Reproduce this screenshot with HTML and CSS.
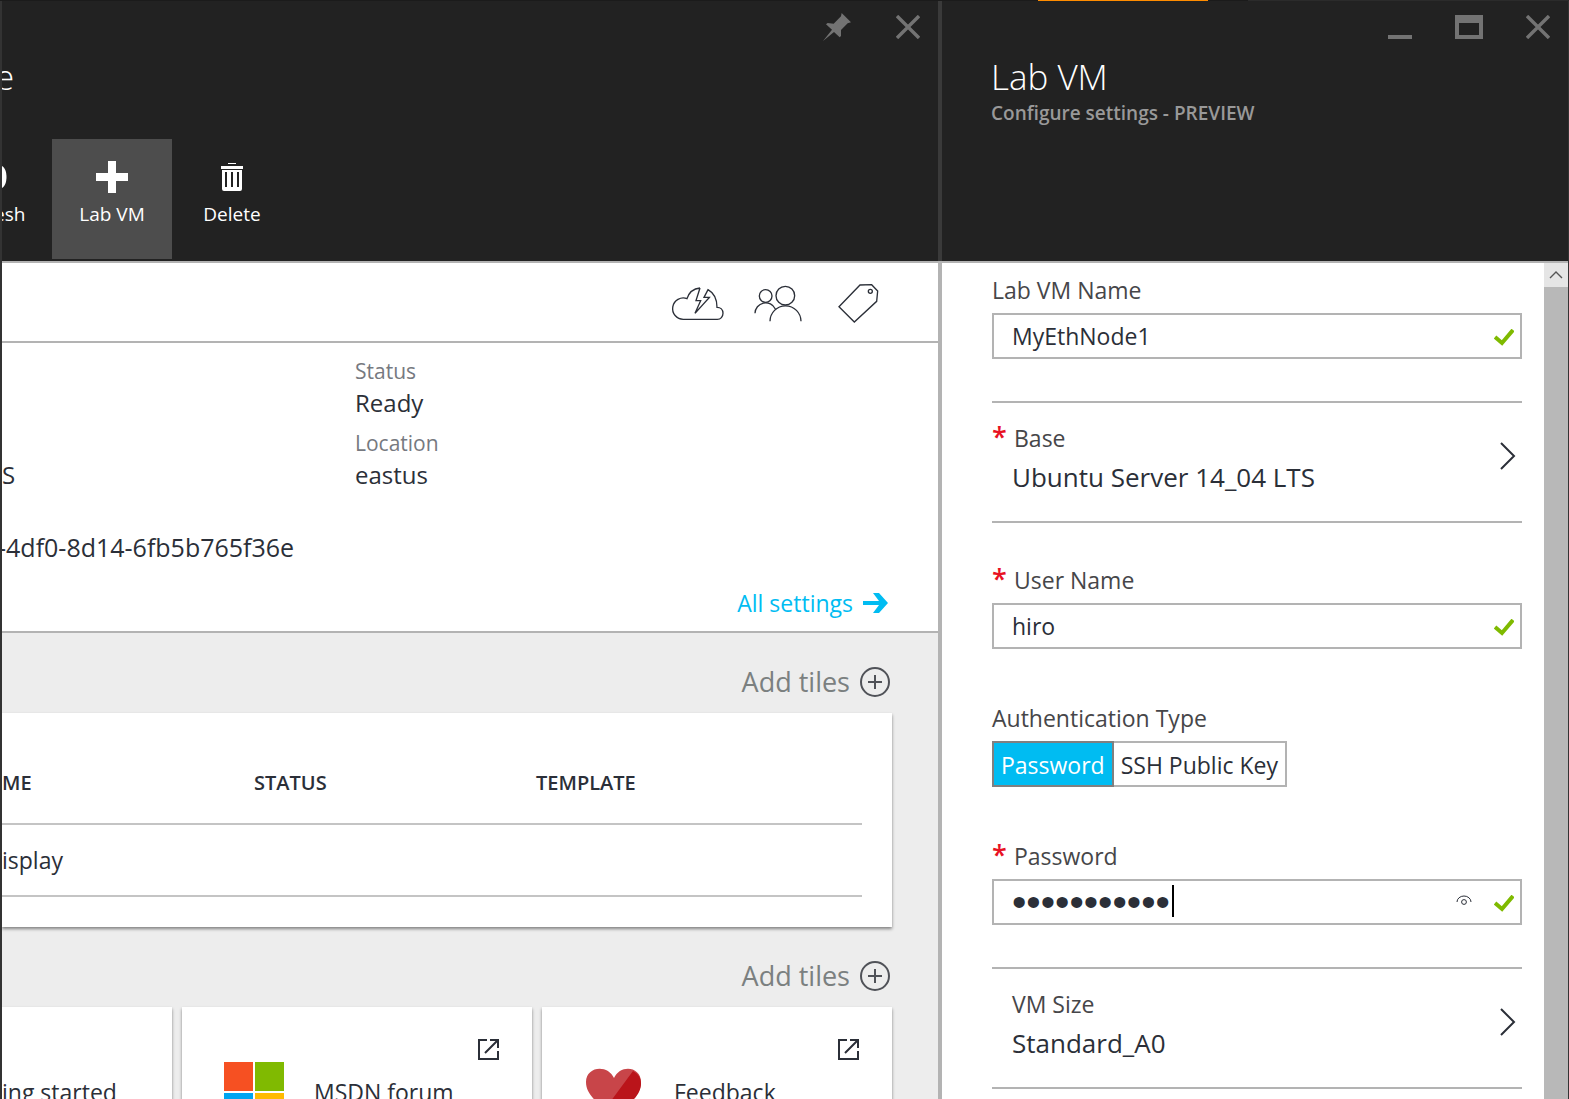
FILE: index.html
```html
<!DOCTYPE html>
<html lang="en">
<head>
<meta charset="utf-8">
<title>Lab VM</title>
<link rel="stylesheet" href="styles.css">
</head>
<body>
<div class="progress"><span class="progress-before"></span><span class="progress-bar"></span><span class="progress-after"></span><span class="progress-rest"></span></div>
<main class="journey">
  <section class="blade blade-lab">
    <header class="blade-header">
      <div class="controls">
        <button class="control" aria-label="Pin"><svg width="28" height="28" viewBox="0 0 84 84"><path d="M56 0 84 28 74 31 54 51 54 69 50 73 33 57 0 84 27 50 9 34 14 30 32 32 54 10Z" fill="#737373"/></svg></button>
        <button class="control" aria-label="Close"><svg width="24" height="24" viewBox="0 0 24 24"><path d="M1 1 23 23M23 1 1 23" stroke="#737373" stroke-width="3.4"/></svg></button>
      </div>
      <h1 class="title title-cut">e</h1>
      <div class="toolbar">
        <button class="tool tool-cut"><svg width="6" height="32" viewBox="0 0 6 32"><path d="M0 5C6 8 6 24 0 27Z" fill="#fff"/></svg><span>esh</span></button>
        <button class="tool tool-active"><svg width="32" height="32" viewBox="0 0 32 32"><path d="M12 0h8v12h12v8H20v12h-8V20H0v-8h12z" fill="#fff"/></svg><span>Lab VM</span></button>
        <button class="tool"><svg width="22" height="32" viewBox="0 0 22 32"><path d="M7 2h8v1H7zM0 5h22v3H0zM1 9h20v19q0 2-2 2H3q-2 0-2-2zM4 11v15h2V11zM10 11v15h2V11zM16 11v15h2V11z" fill="#fff" fill-rule="evenodd"/></svg><span>Delete</span></button>
      </div>
    </header>
    <div class="iconbar">
      <svg width="80" height="78" viewBox="54 37 240 234" class="line-icon"><path d="M180 112 168 150 182 150 165 188 208 140 192 140 204 117Q231 132 231 170C242 170 249 178 249 188S242 206 232 206H130A32 32 0 1 1 141 144C147 125 160 114 180 112M172 180 208 141"/></svg>
      <svg width="80" height="78" viewBox="294 37 240 234" class="line-icon"><circle cx="377" cy="136" r="19"/><circle cx="436" cy="135" r="28"/><path d="M345 188A32 32 0 0 1 406 175M390 212A46 46 0 0 1 483 212"/></svg>
      <svg width="80" height="78" viewBox="534 37 240 234" class="line-icon"><path d="M597 168 660 103 695 102 713 121 710 152 643 214Z"/><circle cx="691" cy="122" r="6"/></svg>
    </div>
    <div class="essentials">
      <div class="facts">
        <div class="facts-left"><span>S</span><span class="fact-id">-4df0-8d14-6fb5b765f36e</span></div>
        <dl class="facts-right">
          <dt>Status</dt><dd>Ready</dd>
          <dt>Location</dt><dd>eastus</dd>
        </dl>
      </div>
      <a class="all-settings" href="#settings">All settings<svg width="25" height="20" viewBox="0 0 25 20"><path d="M0 8h16L10 0h6l9 10-9 10h-6l6-8H0z" fill="#00bcf2"/></svg></a>
    </div>
    <div class="lens">
      <button class="add-tiles">Add tiles<svg width="30" height="30" viewBox="0 0 30 30"><circle cx="15" cy="15" r="14"/><path d="M15 8v14M8 15h14"/></svg></button>
      <div class="tile tile-table">
        <table>
          <thead><tr><th class="col-name">ME</th><th class="col-status">STATUS</th><th>TEMPLATE</th></tr></thead>
          <tbody><tr><td colspan="3">isplay</td></tr></tbody>
        </table>
      </div>
      <button class="add-tiles">Add tiles<svg width="30" height="30" viewBox="0 0 30 30"><circle cx="15" cy="15" r="14"/><path d="M15 8v14M8 15h14"/></svg></button>
      <div class="links">
        <a class="tile link-tile link-cut" href="#start">ing started</a>
        <a class="tile link-tile" href="#forum">
          <svg width="60" height="60" viewBox="0 0 60 60"><path d="M0 0h29v29H0z" fill="#f65022"/><path d="M31 0h29v29H31z" fill="#80ba01"/><path d="M0 31h29v29H0z" fill="#00a5f1"/><path d="M31 31h29v29H31z" fill="#ffbb00"/></svg>
          MSDN forum
          <svg class="external" width="21" height="21" viewBox="0 0 21 21"><path d="M9 1H1v19h19v-8M12 1h8v8M20 1 7 14"/></svg>
        </a>
        <a class="tile link-tile" href="#feedback">
          <svg width="60" height="60" viewBox="0 0 60 60"><path d="M30 16C24 2 2 4 2 20c0 14 14 22 28 36 14-14 27-22 27-36C57 4 36 2 30 16Z" fill="#c84549"/><path d="M49 9c12 6 9 20 1 28-6 6-14 13-20 19l-9-9Z" fill="#ba141a"/></svg>
          Feedback
          <svg class="external" width="21" height="21" viewBox="0 0 21 21"><path d="M9 1H1v19h19v-8M12 1h8v8M20 1 7 14"/></svg>
        </a>
      </div>
    </div>
  </section>
  <div class="divider"></div>
  <section class="blade blade-vm">
    <header class="blade-header">
      <div class="controls">
        <button class="control" aria-label="Minimize"><svg width="24" height="24" viewBox="0 0 24 24"><path d="M0 20h24v4H0z" fill="#737373"/></svg></button>
        <button class="control" aria-label="Maximize"><svg width="28" height="24" viewBox="0 0 28 24"><path d="M0 0h28v24H0zM4 8v12h20V8z" fill="#737373" fill-rule="evenodd"/></svg></button>
        <button class="control" aria-label="Close"><svg width="24" height="24" viewBox="0 0 24 24"><path d="M1 1 23 23M23 1 1 23" stroke="#737373" stroke-width="3.4"/></svg></button>
      </div>
      <h2 class="title">Lab VM</h2>
      <p class="subtitle">Configure settings - PREVIEW</p>
    </header>
    <div class="blade-body">
      <form class="form">
        <div class="field">
          <label class="label" for="vm-name">Lab VM Name</label>
          <div class="box"><input id="vm-name" type="text" value="MyEthNode1"><svg class="check" width="20" height="17" viewBox="0 0 20 17"><path d="M1 8 8 14 19 1" /></svg></div>
        </div>
        <button class="picker" type="button">
          <span class="picker-text"><span class="label"><span class="star">*</span>Base</span><span class="picker-value">Ubuntu Server 14_04 LTS</span></span>
          <svg width="16" height="66" viewBox="0 0 16 66"><path d="M1 20 14 33 1 46"/></svg>
        </button>
        <div class="field">
          <label class="label" for="user-name"><span class="star">*</span>User Name</label>
          <div class="box"><input id="user-name" type="text" value="hiro"><svg class="check" width="20" height="17" viewBox="0 0 20 17"><path d="M1 8 8 14 19 1" /></svg></div>
        </div>
        <div class="field" role="radiogroup" aria-labelledby="auth-type">
          <span class="label" id="auth-type">Authentication Type</span>
          <div class="toggle">
            <label class="option"><input type="radio" name="auth" checked><span>Password</span></label>
            <label class="option"><input type="radio" name="auth"><span>SSH Public Key</span></label>
          </div>
        </div>
        <div class="field">
          <label class="label" for="password"><span class="star">*</span>Password</label>
          <div class="box"><input id="password" type="password" value="abcdefghijk"><span class="caret"></span><svg class="eye" width="16" height="12" viewBox="0 0 16 12"><path d="M1 7a7 6 0 0 1 14 0"/><circle cx="8" cy="7" r="2.4"/></svg><svg class="check" width="20" height="17" viewBox="0 0 20 17"><path d="M1 8 8 14 19 1" /></svg></div>
        </div>
        <button class="picker" type="button">
          <span class="picker-text"><span class="label picker-label">VM Size</span><span class="picker-value">Standard_A0</span></span>
          <svg width="16" height="66" viewBox="0 0 16 66"><path d="M1 20 14 33 1 46"/></svg>
        </button>
      </form>
      <div class="scrollbar"><button class="scroll-up" aria-label="Scroll up"><svg width="14" height="8" viewBox="0 0 14 8"><path d="M1 7 7 1 13 7" fill="none" stroke="#555" stroke-width="1.4"/></svg></button></div>
    </div>
  </section>
</main>
</body>
</html>
```

FILE: styles.css
```css
* { box-sizing: border-box; margin: 0; padding: 0; }
body {
  display: flex;
  flex-direction: column;
  height: 100vh;
  overflow: hidden;
  background: #333;
  color: #2b2f38;
  font: 23px/32px "Open Sans", "Noto Sans", sans-serif;
}
button { border: 0; background: none; color: inherit; font: inherit; text-align: left; }
a { color: inherit; text-decoration: none; }
svg { display: block; flex: none; }

.progress { display: flex; flex: none; height: 1px; background: #1b1b1b; }
.progress-before { flex: 1038; }
.progress-bar { flex: 170; background: #ff8c00; }
.progress-after { flex: 40; }
.progress-rest { flex: 321; background: #2b2b2b; }

.journey {
  display: grid;
  grid-template-columns: minmax(0, 936fr) 4px minmax(0, 626fr);
  flex: 1;
  min-height: 0;
  padding: 0 1px 0 2px;
}
.blade { display: flex; flex-direction: column; min-height: 0; overflow: hidden; background: #fff; }
.blade-header {
  display: flex;
  flex: none;
  flex-direction: column;
  height: 262px;
  border-bottom: 2px solid #b3b3b3;
  background: #222;
  color: #fff;
}
.divider { background: linear-gradient(#3a3a3a 260px, #b3b3b3 260px); }
.controls { display: flex; justify-content: flex-end; gap: 11px; height: 54px; }
.blade-vm .controls { gap: 9px; }
.control { display: flex; align-items: center; justify-content: center; width: 60px; height: 52px; }
.title { padding-left: 49px; font-size: 35px; font-weight: 300; line-height: 44px; }
.title-cut { padding: 0; text-indent: -7px; }
.subtitle { padding-left: 49px; color: #999; font-size: 19px; font-weight: 600; line-height: 28px; }

.toolbar { display: flex; margin: auto 0 2px; }
.tool {
  display: flex;
  flex-direction: column;
  align-items: center;
  gap: 7px;
  width: 120px;
  height: 120px;
  padding-top: 22px;
  font-size: 19px;
  line-height: 28px;
}
.tool-active { background: #4d4d4d; }
.tool-cut { align-items: flex-start; width: 50px; text-indent: -8px; }

.iconbar { display: flex; justify-content: flex-end; padding-right: 40px; border-bottom: 2px solid #b3b3b3; }
.line-icon { fill: none; stroke: #2b2f38; stroke-width: 4; }

.essentials { display: flex; flex-direction: column; padding: 12px 50px 12px 0; border-bottom: 2px solid #b3b3b3; }
.facts { display: grid; grid-template-columns: 353px 1fr; height: 232px; font-size: 24px; }
.facts-left { display: flex; flex-direction: column; gap: 40px; padding-top: 104px; }
.fact-id { font-size: 25px; text-indent: -4px; }
dt { color: #767980; font-size: 21px; }
dd { margin-bottom: 8px; }
.all-settings { display: flex; align-items: center; align-self: flex-end; gap: 10px; color: #00bcf2; }

.lens { flex: 1; padding: 29px 46px 0 0; background: #ededed; }
.add-tiles {
  display: flex;
  align-items: center;
  gap: 10px;
  height: 40px;
  margin: 0 2px 11px auto;
  color: #7b8080;
  font-size: 27px;
}
.add-tiles svg { fill: none; stroke: #505258; stroke-width: 2; }
.tile { background: #fff; box-shadow: 0 2px 3px rgba(0, 0, 0, 0.45); }
.tile-table { margin-bottom: 29px; padding: 30px 30px 30px 0; }
table { width: 100%; border-collapse: collapse; table-layout: fixed; }
th { height: 81px; border-bottom: 2px solid #c4c4c4; font-size: 20px; font-weight: 600; text-align: left; }
td { height: 72px; border-bottom: 2px solid #c4c4c4; }
.col-name { width: 252px; }
.col-status { width: 282px; }
.links { display: flex; gap: 10px; }
.link-tile { position: relative; display: flex; align-items: center; gap: 30px; width: 350px; height: 170px; padding-left: 42px; }
.link-cut { flex: 1; padding-left: 0; }
.external { position: absolute; top: 32px; right: 33px; fill: none; stroke: #2b2f38; stroke-width: 2; }

.blade-body { display: flex; flex: 1; min-height: 0; }
.form { display: flex; flex: 1; flex-direction: column; gap: 42px; padding: 12px 22px 0 50px; }
.field { display: flex; flex-direction: column; gap: 8px; }
.field + .field { margin-top: 12px; }
.label { display: flex; color: #464649; line-height: 30px; }
.star { width: 22px; color: #e81123; font-size: 27px; font-weight: 600; line-height: 28px; }
.box { position: relative; }
.box input {
  display: block;
  width: 100%;
  height: 46px;
  padding: 0 70px 0 18px;
  border: 2px solid #b3b3b3;
  outline: 0;
  background: #fff;
  color: #2b2f38;
  font: inherit;
}
.box input[type="password"] { font: 41px/42px "Liberation Sans", sans-serif; }
.check { position: absolute; top: 16px; right: 8px; fill: none; stroke: #7fba00; stroke-width: 4; }
.eye { position: absolute; top: 16px; right: 50px; fill: none; stroke: #2b2f38; }
.caret { position: absolute; top: 6px; left: 180px; width: 2px; height: 32px; background: #000; }
.picker {
  display: flex;
  justify-content: space-between;
  padding: 20px 6px 26px 0;
  border: solid #b3b3b3;
  border-width: 2px 0;
}
.picker svg { fill: none; stroke: #2b2f38; stroke-width: 2; }
.picker-text { display: flex; flex-direction: column; gap: 6px; }
.picker-label { padding-left: 20px; }
.picker-value { padding-left: 20px; font-size: 26px; line-height: 36px; }
.toggle { display: flex; }
.option input { position: absolute; opacity: 0; }
.option span {
  display: block;
  height: 46px;
  padding: 6px 7px;
  border: 2px solid #b3b3b3;
  border-left-width: 0;
}
.option input:checked + span { border: 2px solid #808080; background: #00bcf2; color: #fff; }
.scrollbar { width: 24px; background: #b8b8b8; }
.scroll-up { display: flex; align-items: center; justify-content: center; width: 24px; height: 24px; background: #e5e5e5; }
```
